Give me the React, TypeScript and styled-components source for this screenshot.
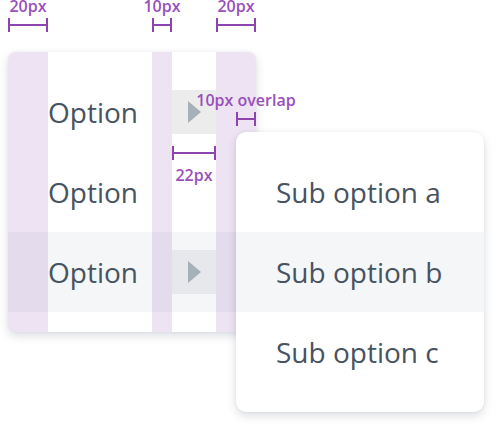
import React from 'react';
import styled, { createGlobalStyle } from 'styled-components';

const GlobalStyle = createGlobalStyle`
  body {
    margin: 0;
    background: #ffffff;
    font-family: "Open Sans", "Liberation Sans", sans-serif;
  }
`;

const Canvas = styled.div`
  position: relative;
  width: 492px;
  height: 424px;
  overflow: hidden;
`;

const Stage = styled.div`
  position: relative;
  width: 248px;
  margin: 52px 0 0 8px;
`;

const Menu = styled.div`
  position: relative;
  width: 248px;
  padding: 20px 0;
  background: #ffffff;
  border-radius: 8px;
  overflow: hidden;
  box-shadow: 0 4px 10px rgba(40, 52, 80, 0.16), 0 0 3px rgba(40, 52, 80, 0.06);
`;

const Row = styled.div<{ $active?: boolean }>`
  display: flex;
  align-items: center;
  height: 80px;
  padding: 0 40px;
  background: ${({ $active }) => ($active ? '#f4f6f8' : 'transparent')};
`;

const Label = styled.span`
  flex: 1;
  font-size: 28px;
  color: #47535f;
  white-space: nowrap;
`;

const ArrowBox = styled.div<{ $active?: boolean }>`
  display: flex;
  align-items: center;
  justify-content: center;
  width: 44px;
  height: 44px;
  margin-left: 20px;
  background: ${({ $active }) => ($active ? '#e6e8eb' : '#ececec')};
`;

const Spacer = styled.div`
  width: 44px;
  margin-left: 20px;
`;

const Stripe = styled.div<{ $left: number; $width: number }>`
  position: absolute;
  top: 0;
  bottom: 0;
  left: ${({ $left }) => $left}px;
  width: ${({ $width }) => $width}px;
  background: rgba(142, 68, 173, 0.15);
  pointer-events: none;
`;

const SubMenu = styled.div`
  position: absolute;
  left: 228px;
  top: 80px;
  width: 248px;
  padding: 20px 0;
  background: #ffffff;
  border-radius: 10px;
  overflow: hidden;
  z-index: 2;
  box-shadow: 0 4px 10px rgba(40, 52, 80, 0.16), 0 0 3px rgba(40, 52, 80, 0.06);
`;

const Dim = styled.div<{ $x: number; $y: number; $w: number }>`
  position: absolute;
  left: ${({ $x }) => $x}px;
  top: ${({ $y }) => $y}px;
  width: ${({ $w }) => $w}px;
  height: 14px;
  z-index: 3;
  border-left: 2px solid #8e44ad;
  border-right: 2px solid #8e44ad;
  box-sizing: border-box;

  &::after {
    content: '';
    position: absolute;
    left: 0;
    right: 0;
    top: 6px;
    height: 2px;
    background: #8e44ad;
  }
`;

const DimText = styled.span<{ $below?: boolean }>`
  position: absolute;
  left: 50%;
  transform: translateX(-50%);
  ${({ $below }) => ($below ? 'top: 23px;' : 'bottom: 19px;')}
  font-size: 16px;
  font-weight: 600;
  line-height: 13px;
  color: #9a4fbb;
  white-space: nowrap;
`;

const Arrow = () => (
  <svg width="13" height="22" viewBox="0 0 13 22">
    <polygon points="0,0 13,11 0,22" fill="#a6b0b8" />
  </svg>
);

const Dimension: React.FC<{ x: number; y: number; w: number; text: string; below?: boolean }> = ({
  x,
  y,
  w,
  text,
  below,
}) => (
  <Dim $x={x} $y={y} $w={w}>
    <DimText $below={below}>{text}</DimText>
  </Dim>
);

export default function App() {
  return (
    <Canvas>
      <GlobalStyle />
      <Stage>
        <Menu>
          <Row>
            <Label>Option</Label>
            <ArrowBox>
              <Arrow />
            </ArrowBox>
          </Row>
          <Row>
            <Label>Option</Label>
            <Spacer />
          </Row>
          <Row $active>
            <Label>Option</Label>
            <ArrowBox $active>
              <Arrow />
            </ArrowBox>
          </Row>
          <Stripe $left={0} $width={40} />
          <Stripe $left={144} $width={20} />
          <Stripe $left={208} $width={40} />
        </Menu>
        <SubMenu>
          <Row>
            <Label>Sub option a</Label>
          </Row>
          <Row $active>
            <Label>Sub option b</Label>
          </Row>
          <Row>
            <Label>Sub option c</Label>
          </Row>
        </SubMenu>
      </Stage>
      <Dimension x={8} y={18} w={40} text="20px" />
      <Dimension x={152} y={18} w={20} text="10px" />
      <Dimension x={216} y={18} w={40} text="20px" />
      <Dimension x={236} y={112} w={20} text="10px overlap" />
      <Dimension x={172} y={146} w={44} text="22px" below />
    </Canvas>
  );
}
